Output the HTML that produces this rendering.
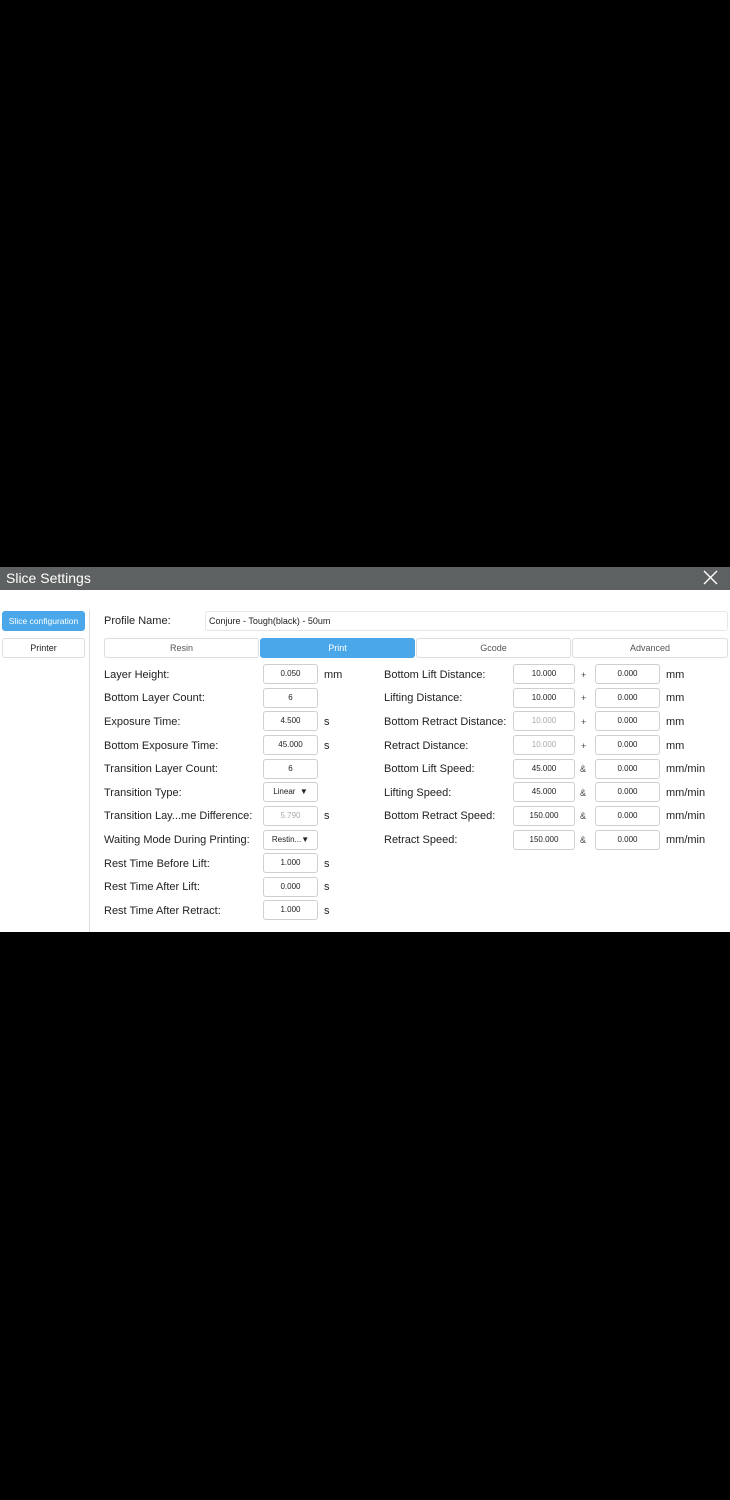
<!DOCTYPE html>
<html><head><meta charset="utf-8"><style>
*{margin:0;padding:0;box-sizing:border-box}
body{width:730px;height:1500px;background:#000;position:relative;font-family:"Liberation Sans","DejaVu Sans",sans-serif;overflow:hidden}
.a{position:absolute}
.hdr{left:0;top:567px;width:730px;height:23px;background:#5e6161;color:#fff;font-size:14px;line-height:22px;padding-left:6px}
.panel{left:0;top:590px;width:730px;height:342px;background:#fff}
.btn{border:1px solid #ddd;border-radius:3px;font-size:9px;text-align:center;line-height:18px;color:#222;background:#fff}
.blue{background:#4aa8ea;border-color:#4aa8ea;color:#fff}
.lbl{font-size:11px;color:#222;line-height:14px}
.in{border:1px solid #cfcfcf;border-radius:3px;height:20px;font-size:8px;text-align:center;line-height:18px;color:#222;background:#fff}
.dim{color:#aaa}
.u{font-size:11px;color:#222;line-height:14px}
.sm{font-size:9px;color:#444;line-height:14px}
</style></head><body>
<div class="a hdr">Slice Settings</div>
<svg class="a" style="left:703px;top:570px" width="15" height="15" viewBox="0 0 15 15"><path d="M1 1L14 14M14 1L1 14" stroke="#fff" stroke-width="1.4"/></svg>
<div class="a panel"></div>
<div class="a btn blue" style="left:2px;top:611px;width:83px;height:20px;font-size:8.5px">Slice configuration</div>
<div class="a btn" style="left:2px;top:638px;width:83px;height:20px">Printer</div>
<div class="a" style="left:89px;top:610px;width:1px;height:322px;background:#ddd"></div>
<div class="a lbl" style="left:104px;top:614px">Profile Name:</div>
<div class="a" style="left:205px;top:611px;width:523px;height:20px;border:1px solid #e6e6e6;border-radius:3px;font-size:9px;line-height:18px;padding-left:3px;color:#222">Conjure - Tough(black) - 50um</div>
<div class="a btn" style="left:104px;top:638px;width:155px;height:20px;color:#555">Resin</div>
<div class="a btn blue" style="left:260px;top:638px;width:155px;height:20px">Print</div>
<div class="a btn" style="left:416px;top:638px;width:155px;height:20px;color:#555">Gcode</div>
<div class="a btn" style="left:572px;top:638px;width:156px;height:20px;color:#555">Advanced</div>

<div class="a lbl" style="left:104px;top:668px">Layer Height:</div>
<div class="a in" style="left:263px;top:664px;width:55px">0.050</div><div class="a u" style="left:324px;top:668px">mm</div>
<div class="a lbl" style="left:104px;top:691px">Bottom Layer Count:</div>
<div class="a in" style="left:263px;top:688px;width:55px">6</div>
<div class="a lbl" style="left:104px;top:715px">Exposure Time:</div>
<div class="a in" style="left:263px;top:711px;width:55px">4.500</div><div class="a u" style="left:324px;top:715px">s</div>
<div class="a lbl" style="left:104px;top:739px">Bottom Exposure Time:</div>
<div class="a in" style="left:263px;top:735px;width:55px">45.000</div><div class="a u" style="left:324px;top:739px">s</div>
<div class="a lbl" style="left:104px;top:762px">Transition Layer Count:</div>
<div class="a in" style="left:263px;top:759px;width:55px">6</div>
<div class="a lbl" style="left:104px;top:786px">Transition Type:</div>
<div class="a in" style="left:263px;top:782px;width:55px">Linear &nbsp;▼</div>
<div class="a lbl" style="left:104px;top:809px">Transition Lay...me Difference:</div>
<div class="a in dim" style="left:263px;top:806px;width:55px">5.790</div><div class="a u" style="left:324px;top:809px">s</div>
<div class="a lbl" style="left:104px;top:833px">Waiting Mode During Printing:</div>
<div class="a in" style="left:263px;top:830px;width:55px">Restin...▼</div>
<div class="a lbl" style="left:104px;top:857px">Rest Time Before Lift:</div>
<div class="a in" style="left:263px;top:853px;width:55px">1.000</div><div class="a u" style="left:324px;top:857px">s</div>
<div class="a lbl" style="left:104px;top:880px">Rest Time After Lift:</div>
<div class="a in" style="left:263px;top:877px;width:55px">0.000</div><div class="a u" style="left:324px;top:880px">s</div>
<div class="a lbl" style="left:104px;top:904px">Rest Time After Retract:</div>
<div class="a in" style="left:263px;top:900px;width:55px">1.000</div><div class="a u" style="left:324px;top:904px">s</div>

<div class="a lbl" style="left:384px;top:668px">Bottom Lift Distance:</div>
<div class="a in" style="left:513px;top:664px;width:62px">10.000</div><div class="a sm" style="left:581px;top:668px">+</div>
<div class="a in" style="left:595px;top:664px;width:65px">0.000</div><div class="a u" style="left:666px;top:668px">mm</div>
<div class="a lbl" style="left:384px;top:691px">Lifting Distance:</div>
<div class="a in" style="left:513px;top:688px;width:62px">10.000</div><div class="a sm" style="left:581px;top:691px">+</div>
<div class="a in" style="left:595px;top:688px;width:65px">0.000</div><div class="a u" style="left:666px;top:691px">mm</div>
<div class="a lbl" style="left:384px;top:715px">Bottom Retract Distance:</div>
<div class="a in dim" style="left:513px;top:711px;width:62px">10.000</div><div class="a sm" style="left:581px;top:715px">+</div>
<div class="a in" style="left:595px;top:711px;width:65px">0.000</div><div class="a u" style="left:666px;top:715px">mm</div>
<div class="a lbl" style="left:384px;top:739px">Retract Distance:</div>
<div class="a in dim" style="left:513px;top:735px;width:62px">10.000</div><div class="a sm" style="left:581px;top:739px">+</div>
<div class="a in" style="left:595px;top:735px;width:65px">0.000</div><div class="a u" style="left:666px;top:739px">mm</div>
<div class="a lbl" style="left:384px;top:762px">Bottom Lift Speed:</div>
<div class="a in" style="left:513px;top:759px;width:62px">45.000</div><div class="a sm" style="left:580px;top:762px">&amp;</div>
<div class="a in" style="left:595px;top:759px;width:65px">0.000</div><div class="a u" style="left:666px;top:762px">mm/min</div>
<div class="a lbl" style="left:384px;top:786px">Lifting Speed:</div>
<div class="a in" style="left:513px;top:782px;width:62px">45.000</div><div class="a sm" style="left:580px;top:786px">&amp;</div>
<div class="a in" style="left:595px;top:782px;width:65px">0.000</div><div class="a u" style="left:666px;top:786px">mm/min</div>
<div class="a lbl" style="left:384px;top:809px">Bottom Retract Speed:</div>
<div class="a in" style="left:513px;top:806px;width:62px">150.000</div><div class="a sm" style="left:580px;top:809px">&amp;</div>
<div class="a in" style="left:595px;top:806px;width:65px">0.000</div><div class="a u" style="left:666px;top:809px">mm/min</div>
<div class="a lbl" style="left:384px;top:833px">Retract Speed:</div>
<div class="a in" style="left:513px;top:830px;width:62px">150.000</div><div class="a sm" style="left:580px;top:833px">&amp;</div>
<div class="a in" style="left:595px;top:830px;width:65px">0.000</div><div class="a u" style="left:666px;top:833px">mm/min</div>
</body></html>
